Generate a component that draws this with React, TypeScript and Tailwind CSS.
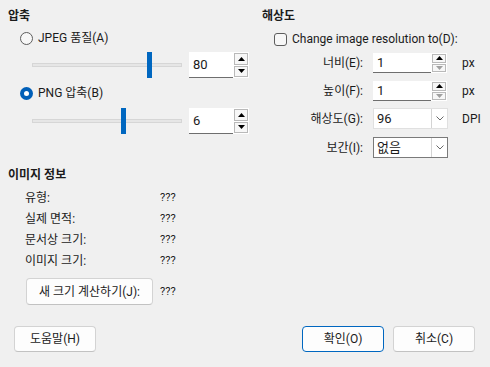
import React from "react";

function Radio({ checked }: { checked?: boolean }) {
  if (checked) {
    return (
      <span className="w-[13px] h-[13px] rounded-full bg-[#005fb8] flex items-center justify-center shrink-0">
        <span className="w-[5px] h-[5px] rounded-full bg-white" />
      </span>
    );
  }
  return <span className="w-[13px] h-[13px] rounded-full border border-[#5d5d5d] bg-[#f7f7f7] shrink-0" />;
}

function Arrow({ up, disabled }: { up?: boolean; disabled?: boolean }) {
  return (
    <svg width="7" height="4" viewBox="0 0 7 4">
      <polygon
        points={up ? "3.5,0 7,4 0,4" : "0,0 7,0 3.5,4"}
        fill={disabled ? "#a0a0a0" : "#000"}
      />
    </svg>
  );
}

function Spin({
  value,
  inputW,
  h,
  downDisabled,
}: {
  value: string;
  inputW: string;
  h: "big" | "small";
  downDisabled?: boolean;
}) {
  const height = h === "big" ? "h-[26px]" : "h-[20px]";
  return (
    <div className={`flex ${height}`}>
      <div
        className={`${inputW} h-full bg-white border-b border-[#6e6e6e] flex items-center pl-[4px] text-[13px]`}
      >
        {value}
      </div>
      <div className="w-[16px] h-full bg-white flex flex-col gap-[1px] px-[1px] py-[1px]">
        <div className="flex-1 border border-[#b9b9b9] bg-[#f7f7f7] flex items-center justify-center">
          <Arrow up />
        </div>
        <div className="flex-1 border border-[#b9b9b9] bg-[#f7f7f7] flex items-center justify-center">
          <Arrow disabled={downDisabled} />
        </div>
      </div>
    </div>
  );
}

function Slider({ pos }: { pos: number }) {
  return (
    <div className="relative w-[150px] h-[4px] bg-[#e6e6e6] border border-[#d6d6d6]">
      <div
        className="absolute top-[-12px] w-[5px] h-[26px] bg-[#0067c0]"
        style={{ left: pos }}
      />
    </div>
  );
}

function Combo({ value, focused }: { value: string; focused?: boolean }) {
  return (
    <div
      className={`flex w-[75px] h-[21px] bg-white border ${
        focused ? "border-[#7a7a7a]" : "border-[#e0e0e0]"
      }`}
    >
      <div className="flex-1 flex items-center pl-[3px] text-[13px]">{value}</div>
      <div className="w-[16px] border-l border-[#d4d4d4] flex items-center justify-center">
        <svg width="8" height="5" viewBox="0 0 8 5">
          <polyline points="0.5,0.5 4,4 7.5,0.5" fill="none" stroke="#6a6a6a" strokeWidth="1" />
        </svg>
      </div>
    </div>
  );
}

function Button({ label, w, primary }: { label: string; w: string; primary?: boolean }) {
  return (
    <div
      className={`${w} h-full rounded-[4px] bg-[#fdfdfd] border flex items-center justify-center ${
        primary ? "border-[#0067c0]" : "border-[#d3d3d3] border-b-[#c2c2c2]"
      }`}
    >
      {label}
    </div>
  );
}

export default function App() {
  return (
    <div className="w-[490px] h-[367px] bg-[#f0f0f0] text-[12px] text-[#1b1b1b] font-['Roboto','Noto_Sans_CJK_KR',sans-serif] leading-none">
      <div className="flex h-[158px]">
        {/* 압축 */}
        <div className="w-[254px] pl-2">
          <div className="h-[30px] pt-[2px] flex items-center font-bold">압축</div>
          <div className="h-[16px] flex items-center gap-[5px] pl-[12px]">
            <Radio />
            <span>JPEG 품질(A)</span>
          </div>
          <div className="mt-[6px] h-[26px] flex items-center pl-[24px]">
            <Slider pos={114} />
            <div className="ml-[7px]">
              <Spin value="80" inputW="w-[44px]" h="big" />
            </div>
          </div>
          <div className="mt-[7px] h-[16px] flex items-center gap-[5px] pl-[12px]">
            <Radio checked />
            <span>PNG 압축(B)</span>
          </div>
          <div className="mt-[7px] h-[26px] flex items-center pl-[24px]">
            <Slider pos={88} />
            <div className="ml-[7px]">
              <Spin value="6" inputW="w-[44px]" h="big" />
            </div>
          </div>
        </div>

        {/* 해상도 */}
        <div className="pl-2 flex-1">
          <div className="h-[30px] pt-[2px] flex items-center font-bold">해상도</div>
          <div className="h-[16px] flex items-center gap-[5px] pl-[12px] mt-[1px]">
            <span className="w-[13px] h-[13px] rounded-[3px] border border-[#5d5d5d] bg-[#f7f7f7]" />
            <span>Change image resolution to(D):</span>
          </div>
          <div className="mt-[6px] h-[20px] flex items-center">
            <span className="w-[101px] text-right">너비(E):</span>
            <div className="ml-[10px]">
              <Spin value="1" inputW="w-[58px]" h="small" downDisabled />
            </div>
            <span className="ml-[15px]">px</span>
          </div>
          <div className="mt-[8px] h-[20px] flex items-center">
            <span className="w-[101px] text-right">높이(F):</span>
            <div className="ml-[10px]">
              <Spin value="1" inputW="w-[58px]" h="small" downDisabled />
            </div>
            <span className="ml-[15px]">px</span>
          </div>
          <div className="mt-[7px] h-[21px] flex items-center">
            <span className="w-[101px] text-right">해상도(G):</span>
            <div className="ml-[10px]">
              <Combo value="96" />
            </div>
            <span className="ml-[14px]">DPI</span>
          </div>
          <div className="mt-[8px] h-[21px] flex items-center">
            <span className="w-[101px] text-right">보간(I):</span>
            <div className="ml-[10px]">
              <Combo value="없음" focused />
            </div>
          </div>
        </div>
      </div>

      {/* 이미지 정보 */}
      <div className="pl-2">
        <div className="mt-[7px] h-[20px] flex items-center font-bold">이미지 정보</div>
        <div className="mt-[2px] pl-[17px]">
          {[
            ["유형:", "???"],
            ["실제 면적:", "???"],
            ["문서상 크기:", "???"],
            ["이미지 크기:", "???"],
          ].map(([k, v]) => (
            <div key={k} className="h-[21px] flex items-center">
              <span className="w-[135px]">{k}</span>
              <span className="text-[11px]">{v}</span>
            </div>
          ))}
          <div className="mt-[7px] h-[27px] flex items-center">
            <div className="w-[127px] h-full ml-[1px] rounded-[4px] bg-[#fdfdfd] border border-[#d3d3d3] border-b-[#c2c2c2] flex items-center justify-center">
              새 크기 계산하기(J):
            </div>
            <span className="ml-[7px] text-[11px]">???</span>
          </div>
        </div>
      </div>

      {/* buttons */}
      <div className="mt-[21px] h-[26px] flex pl-[14px] pr-[15px]">
        <Button label="도움말(H)" w="w-[82px]" />
        <div className="flex-1" />
        <Button label="확인(O)" w="w-[82px]" primary />
        <div className="w-[9px]" />
        <Button label="취소(C)" w="w-[82px]" />
      </div>
    </div>
  );
}
